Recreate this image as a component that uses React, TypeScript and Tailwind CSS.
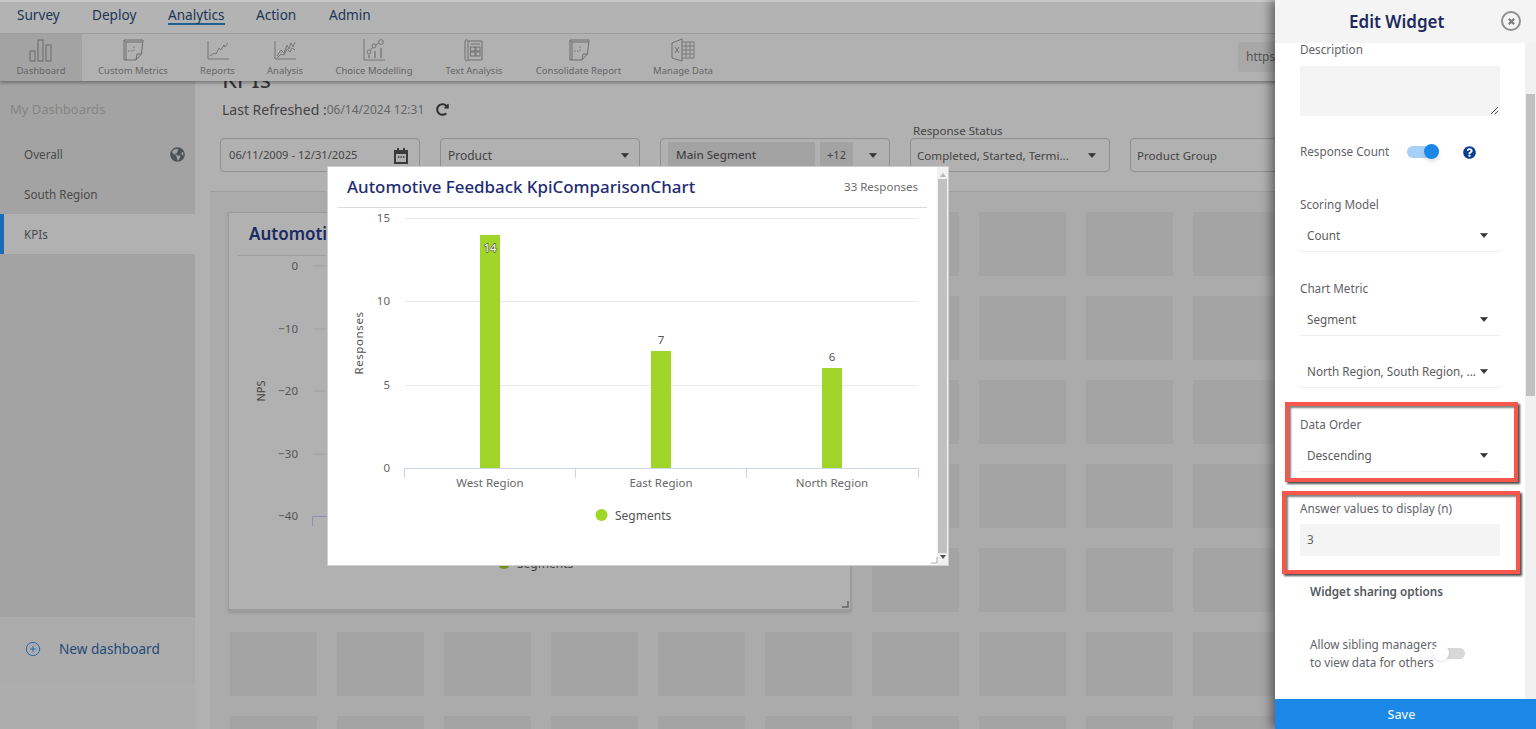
import { CirclePlus } from 'lucide-react';
import { FaGlobeAmericas, FaQuestionCircle, FaRedoAlt } from 'react-icons/fa';

const navItems = [
  { label: 'Survey', className: 'w-[75px]' },
  { label: 'Deploy', className: 'w-[76px]' },
  { label: 'Analytics', className: 'w-[88px]', active: true },
  { label: 'Action', className: 'w-[73px]' },
  { label: 'Admin', className: 'w-[60px]' },
];

function Caret({ className = '' }: { className?: string }) {
  return (
    <svg viewBox="0 0 8 5" className={`w-[8px] h-[5px] shrink-0 ${className}`}>
      <path d="M0.5 0.5 H7.5 L4 4.5 Z" fill="currentColor" stroke="currentColor" strokeLinejoin="round" strokeWidth="0.6" />
    </svg>
  );
}

function PaperIcon() {
  return (
    <svg viewBox="0 0 24 24" className="w-[24px] h-[24px]" fill="none" stroke="#6f6f6f" strokeWidth="1">
      <path d="M3 2 H22 L20.5 16 L15 22 H3 Z" />
      <path d="M3 2 L5 4 H22 M5 4 V22" />
      <path d="M15 22 L16 16 H20.5" />
      <path d="M7 13 H13 V7" strokeDasharray="1.5 1.5" />
    </svg>
  );
}

function ToolIcon({ name }: { name: string }) {
  if (name === 'Dashboard') {
    return (
      <svg viewBox="0 0 24 24" className="w-[24px] h-[24px]" fill="none" stroke="#6f6f6f" strokeWidth="1.1">
        <rect x="1" y="13" width="5" height="10" />
        <rect x="9" y="2" width="5" height="21" />
        <rect x="17" y="7" width="5" height="16" />
      </svg>
    );
  }
  if (name === 'Reports') {
    return (
      <svg viewBox="0 0 24 24" className="w-[24px] h-[24px]" fill="none" stroke="#6f6f6f" strokeWidth="0.9">
        <path d="M2 3 V21 H23" />
        <path d="M4 18 L8 15 L10 16 L13 10 L15 12 L18 7 L19 9 L22 5" />
      </svg>
    );
  }
  if (name === 'Analysis') {
    return (
      <svg viewBox="0 0 24 24" className="w-[24px] h-[24px]" fill="none" stroke="#6f6f6f" strokeWidth="0.9">
        <path d="M2 3 V21 H23" />
        <path d="M4 18 L8 12 L11 15 L14 7 L16 11 L18 5 L20 9 L22 4" />
        <path d="M4 20 L8 16 L11 17 L14 11 L17 14 L19 10 L22 12" />
      </svg>
    );
  }
  if (name === 'Choice Modelling') {
    return (
      <svg viewBox="0 0 24 24" className="w-[24px] h-[24px]" fill="none" stroke="#6f6f6f" strokeWidth="0.9">
        <path d="M2 1 V22 H23" />
        <circle cx="7" cy="14" r="2" />
        <circle cx="12" cy="8" r="2" />
        <circle cx="19" cy="4" r="2.4" />
        <path d="M8.5 12.5 L10.5 9.5 M14 7 L17 5" />
        <path d="M7 17 V20 M13 13 V20 M19 10 V20" strokeWidth="1.2" />
      </svg>
    );
  }
  if (name === 'Text Analysis') {
    return (
      <svg viewBox="0 0 24 24" className="w-[24px] h-[24px]" fill="none" stroke="#6f6f6f" strokeWidth="1">
        <path d="M6 3 H20 V22 H6" />
        <path d="M3 4 C3 1 6 1 6 4 V21 C6 23.5 3 23.5 3 21 Z" />
        <rect x="8.5" y="9" width="4.5" height="4" />
        <rect x="14" y="9" width="4" height="4" />
        <rect x="8.5" y="14" width="4.5" height="4" />
        <rect x="14" y="14" width="4" height="4" />
        <path d="M8.5 6 H18" />
      </svg>
    );
  }
  if (name === 'Manage Data') {
    return (
      <svg viewBox="0 0 24 24" className="w-[24px] h-[24px]" fill="none" stroke="#6f6f6f" strokeWidth="1">
        <path d="M1 5 L11 1 V23 L1 20 Z" />
        <path d="M11 4 H23 V20 H11 M15 4 V20 M19 4 V20 M11 8 H23 M11 12 H23 M11 16 H23" strokeWidth="0.8" />
        <path d="M4 9 L8 15 M8 9 L4 15" />
      </svg>
    );
  }
  return <PaperIcon />;
}

const toolItems = [
  { label: 'Dashboard', className: 'w-[82px] bg-[#a3a3a3]' },
  { label: 'Custom Metrics', className: 'w-[102px]' },
  { label: 'Reports', className: 'w-[67px]' },
  { label: 'Analysis', className: 'w-[68px]' },
  { label: 'Choice Modelling', className: 'w-[110px]' },
  { label: 'Text Analysis', className: 'w-[90px]' },
  { label: 'Consolidate Report', className: 'w-[119px]' },
  { label: 'Manage Data', className: 'w-[90px]' },
];

function BackgroundCard() {
  const ticks = [
    { label: '0', y: 266 },
    { label: '−10', y: 329 },
    { label: '−20', y: 391 },
    { label: '−30', y: 454 },
    { label: '−40', y: 516 },
  ];
  return (
    <div className="absolute left-[18px] top-[20px] w-[623px] h-[400px] bg-[#b1b1b1] border border-[#9c9c9c] border-b-[3px] shadow-sm">
      <div className="mx-[9px] h-[43px] border-b border-[#a0a0a0] pl-[11px] pt-[8px] text-[17px] font-semibold text-[#1a2a62] whitespace-nowrap">
        Automotive Feedback
      </div>
      <svg viewBox="229 256 621 340" className="w-[621px] h-[340px]">
        {ticks.map((t) => (
          <g key={t.label}>
            <text x="298" y={t.y + 4} textAnchor="end" fontSize="11.5" fill="#555">
              {t.label}
            </text>
            {t.label !== '−40' && <line x1="313" x2="840" y1={t.y} y2={t.y} stroke="#a2a2a2" />}
          </g>
        ))}
        <path d="M312.5 526 V516.5 H330" fill="none" stroke="#8d93a8" />
        <text transform="translate(265 391) rotate(-90)" textAnchor="middle" fontSize="11" fill="#444">
          NPS
        </text>
        <circle cx="504" cy="563" r="6" fill="#6f9018" />
        <text x="517" y="568" fontSize="12" fill="#444">
          Segments
        </text>
      </svg>
      <svg viewBox="0 0 8 8" className="absolute right-[1px] bottom-[1px] w-[8px] h-[8px]">
        <path d="M7 1 V7 H1" fill="none" stroke="#666" strokeWidth="1.5" />
      </svg>
    </div>
  );
}

function ChartModal() {
  const gridlines = [
    { label: '15', y: 218 },
    { label: '10', y: 301 },
    { label: '5', y: 385 },
  ];
  const bars = [
    { label: 'West Region', value: '14', x: 480, top: 235, cx: 490 },
    { label: 'East Region', value: '7', x: 651, top: 351, cx: 661 },
    { label: 'North Region', value: '6', x: 822, top: 368, cx: 832 },
  ];
  return (
    <div className="absolute left-[327px] top-[166px] w-[622px] h-[400px] bg-white border border-[#cfcfcf] z-20 flex">
      <div className="flex-1 min-w-0">
        <div className="mx-[10px] h-[41px] flex items-center justify-between border-b border-[#dcdcdc] px-[9px]">
          <span className="text-[16.9px] font-medium text-[#1f2d73] whitespace-nowrap">Automotive Feedback KpiComparisonChart</span>
          <span className="text-[11.5px] text-[#6b6b6b] whitespace-nowrap">33 Responses</span>
        </div>
        <svg viewBox="328 208 610 357" className="w-[610px] h-[357px]">
          {gridlines.map((g) => (
            <g key={g.label}>
              <line x1="405" x2="918" y1={g.y + 0.5} y2={g.y + 0.5} stroke="#e8e8ee" />
              <text x="390" y={g.y + 4} textAnchor="end" fontSize="11.5" fill="#666">
                {g.label}
              </text>
            </g>
          ))}
          <text x="390" y="472" textAnchor="end" fontSize="11.5" fill="#666">
            0
          </text>
          <path d="M404.5 478 V468.5 H918.5 V478 M575.5 468.5 V478 M746.5 468.5 V478" fill="none" stroke="#ccd6eb" />
          <text transform="translate(363 343) rotate(-90)" textAnchor="middle" fontSize="11.5" letterSpacing="0.6" fill="#555">
            Responses
          </text>
          {bars.map((b) => (
            <g key={b.label}>
              <rect x={b.x} y={b.top} width="20" height={468 - b.top} fill="#a0d52a" />
              <text
                x={b.cx}
                y={b.value === '14' ? 252 : b.top - 7}
                textAnchor="middle"
                fontSize="11.5"
                fill={b.value === '14' ? '#fff' : '#555'}
                stroke={b.value === '14' ? '#5a6a40' : 'none'}
                strokeWidth="1.4"
                paintOrder="stroke"
              >
                {b.value}
              </text>
              <text x={b.cx} y="487" textAnchor="middle" fontSize="11.5" fill="#666">
                {b.label}
              </text>
            </g>
          ))}
          <circle cx="601.5" cy="515" r="6" fill="#a0d52a" />
          <text x="615" y="520" fontSize="12" fill="#555">
            Segments
          </text>
        </svg>
      </div>
      <div className="w-[11px] bg-[#f1f1f1] flex flex-col items-center justify-between">
        <span className="w-0 h-0 mt-[6px] border-x-[3px] border-x-transparent border-b-[4px] border-b-[#b8b8b8]" />
        <span className="w-[9px] h-[374px] bg-[#c1c1c1]" />
        <span className="w-0 h-0 mb-[6px] border-x-[3px] border-x-transparent border-t-[4px] border-t-[#505050]" />
      </div>
      <svg viewBox="0 0 8 8" className="absolute right-[10px] bottom-[1px] w-[8px] h-[8px]">
        <path d="M7 1 V7 H1" fill="none" stroke="#aaa" />
      </svg>
    </div>
  );
}

function SelectRow({ value }: { value: string }) {
  return (
    <div className="h-[32px] flex items-center justify-between border-b border-[#ececec] pl-[7px] pr-[12px] text-[11.7px] text-[#5c5c5c]">
      <span className="whitespace-nowrap">{value}</span>
      <Caret className="text-[#333]" />
    </div>
  );
}

function EditDrawer() {
  return (
    <aside className="absolute right-0 top-0 w-[261px] h-[729px] z-30 bg-white flex flex-col shadow-[-4px_0_10px_rgba(0,0,0,0.45)]">
      <div className="h-[43px] shrink-0 bg-[#f4f4f4] relative flex items-center pl-[74px] text-[17px] font-semibold text-[#1e2a5e]">
        Edit Widget
        <span className="absolute left-[226px] top-[11px] w-[20px] h-[20px] rounded-full border-2 border-[#8f8f8f] flex items-center justify-center">
          <svg viewBox="0 0 10 10" className="w-[9px] h-[9px]">
            <path d="M2 2 L8 8 M8 2 L2 8" stroke="#7a7a7a" strokeWidth="2.4" />
          </svg>
        </span>
      </div>

      <div className="flex-1 min-h-0 flex">
        <div className="w-[250px] relative overflow-hidden">
          <div className="pl-[25px] pr-[25px] text-[11.7px] text-[#5f6368]">
            <div className="h-[23px] leading-[12px]">Description</div>
            <div className="h-[50px] bg-[#f4f4f4] relative">
              <svg viewBox="0 0 9 9" className="absolute right-[1px] bottom-[1px] w-[9px] h-[9px]">
                <path d="M1 8 L8 1 M5 8 L8 5" stroke="#555" />
              </svg>
            </div>
            <div className="h-[20px] mt-[26px] flex items-center">
              <span className="w-[107px] whitespace-nowrap">Response Count</span>
              <span className="relative w-[32px] h-[12px] rounded-full bg-[#a6d0f5]">
                <span className="absolute right-0 top-[-2px] w-[15px] h-[15px] rounded-full bg-[#1b87e6] shadow-md" />
              </span>
              <FaQuestionCircle className="ml-[24px] text-[13px] text-[#0b3d8f]" />
            </div>

            <div className="h-[18px] mt-[34px] flex items-center">Scoring Model</div>
            <div className="mt-[6px]">
              <SelectRow value="Count" />
            </div>

            <div className="h-[18px] mt-[28px] flex items-center">Chart Metric</div>
            <div className="mt-[6px]">
              <SelectRow value="Segment" />
            </div>
            <div className="mt-[20px]">
              <SelectRow value="North Region, South Region, ..." />
            </div>

            <div className="h-[18px] mt-[28px] flex items-center">Data Order</div>
            <div className="mt-[6px]">
              <SelectRow value="Descending" />
            </div>

            <div className="h-[18px] mt-[28px] flex items-center whitespace-nowrap">Answer values to display (n)</div>
            <div className="h-[32px] mt-[6px] bg-[#f4f4f4] flex items-center pl-[7px]">3</div>

            <div className="h-[18px] mt-[27px] pl-[10px] flex items-center font-semibold text-[#55595e] whitespace-nowrap">
              Widget sharing options
            </div>
            <div className="mt-[34px] pl-[10px] h-[36px] relative leading-[18px] whitespace-nowrap">
              <div>Allow sibling managers</div>
              <div>to view data for others</div>
              <span className="absolute left-[133px] top-[13px] w-[32px] h-[11px] rounded-full bg-[#d8d8d8]">
                <span className="absolute left-0 top-[-3px] w-[16px] h-[16px] rounded-full bg-white shadow" />
              </span>
            </div>
          </div>
        </div>
        <div className="flex-1 bg-[#f1f1f1] pl-[1px]">
          <div className="h-[302px] w-[9px] mt-[51px] bg-[#c1c1c1]" />
        </div>
      </div>

      <div className="h-[30px] shrink-0 bg-[#1b87e6] flex items-center justify-center pt-[3px] text-[12.5px] font-medium text-[#e8f3fd] pr-[8px]">
        Save
      </div>

      <div className="absolute left-[10px] top-[402px] w-[233px] h-[80px] border-[4px] border-[#f6564c] shadow-[2px_2px_2px_rgba(0,0,0,0.7),inset_2px_2px_2px_rgba(0,0,0,0.5)]" />
      <div className="absolute left-[7px] top-[491px] w-[238px] h-[83px] border-[4px] border-[#f6564c] shadow-[2px_2px_2px_rgba(0,0,0,0.7),inset_2px_2px_2px_rgba(0,0,0,0.5)]" />
    </aside>
  );
}

export default function App() {
  return (
    <div className="relative w-[1536px] h-[729px] overflow-hidden flex flex-col bg-[#b1b1b1] [font-family:'Noto_Sans',sans-serif]">
      <nav className="h-[34px] shrink-0 flex items-center pl-[17px] pb-[5px] bg-[#b3b3b3] border-t-2 border-t-[#c8c8c8] border-b border-b-[#a0a0a0] text-[13.6px] text-[#1c3557]">
        {navItems.map((item) => (
          <div key={item.label} className={item.className}>
            <span className={`inline-block leading-[17px] ${item.active ? 'border-b-2 border-[#1f5f8f]' : ''}`}>{item.label}</span>
          </div>
        ))}
      </nav>

      <div className="h-[47px] shrink-0 relative z-10 flex bg-[#b1b1b1] shadow-[0_2px_3px_rgba(0,0,0,0.3)]">
        {toolItems.map((item) => (
          <div key={item.label} className={`flex flex-col items-center pt-[4px] ${item.className}`}>
            <ToolIcon name={item.label} />
            <span className="mt-[3px] text-[9.5px] leading-[12px] text-[#666] whitespace-nowrap">{item.label}</span>
          </div>
        ))}
        <div className="absolute left-[1238px] top-[8px] w-[60px] h-[30px] rounded-[3px] bg-[#a8a8a8] pl-[8px] flex items-center text-[12px] text-[#555]">
          https:
        </div>
      </div>

      <div className="flex flex-1 min-h-0">
        <aside className="w-[195px] shrink-0 flex flex-col bg-[#adadad]">
          <div className="h-[536px] bg-[#a3a3a3]">
            <div className="h-[53px] pl-[10px] pt-[19px] text-[13px] leading-[18px] text-[#858585]">My Dashboards</div>
            <div className="h-[40px] pl-[24px] pr-[10px] pt-[1px] flex items-center justify-between text-[11.7px] text-[#4a4a4a]">
              Overall
              <FaGlobeAmericas className="text-[15px] text-[#4e5358]" />
            </div>
            <div className="h-[40px] pl-[24px] pt-[1px] flex items-center text-[11.7px] text-[#4a4a4a]">South Region</div>
            <div className="h-[40px] pl-[20px] pt-[1px] flex items-center text-[11.7px] text-[#4a4a4a] bg-[#b1b1b1] border-l-4 border-[#1a6cb8]">KPIs</div>
          </div>
          <div className="h-[66px] bg-[#ababab] pl-[25px] pb-[2px] flex items-center text-[13.6px] text-[#1e4a78]">
            <CirclePlus className="w-[16px] h-[16px] text-[#2a6bb5]" strokeWidth={1.5} />
            <span className="ml-[18px]">New dashboard</span>
          </div>
        </aside>

        <main className="flex-1 min-w-0 flex flex-col pl-[15px] overflow-hidden">
          <div className="h-[111px] shrink-0 relative border-b border-[#9f9f9f]">
            <h1 className="absolute left-[12px] top-[-18px] text-[24px] leading-[32px] text-[#333]">KPIs</h1>
            <div className="absolute left-[12px] top-[18px] flex items-center whitespace-nowrap">
              <span className="text-[14px] text-[#444]">Last Refreshed :</span>
              <span className="text-[12px] text-[#666]">06/14/2024 12:31</span>
              <FaRedoAlt className="ml-[12px] text-[13px] text-[#333]" />
            </div>
            <div className="absolute left-[10px] top-[57px] flex gap-[20px] text-[11.6px] text-[#444] whitespace-nowrap">
              <div className="w-[200px] h-[34px] border border-[#8f8f8f] rounded-[4px] pl-[8px] pr-[11px] pt-[1px] flex items-center justify-between">
                <span className="text-[11.2px]">06/11/2009 - 12/31/2025</span>
                <svg viewBox="0 0 14 16" className="w-[14px] h-[16px]">
                  <path d="M3 0 h2 v2 h4 v-2 h2 v2 h3 v14 h-14 v-14 h3 z" fill="#3a3a3a" />
                  <rect x="2" y="6" width="10" height="8" fill="#b0b0b0" />
                  <path d="M4 9 h1.5 M6.5 9 h1.5 M9 9 h1.5" stroke="#3a3a3a" strokeWidth="1.5" />
                </svg>
              </div>
              <div className="w-[200px] h-[34px] border border-[#8f8f8f] rounded-[4px] pl-[7px] pr-[10px] pt-[1px] flex items-center justify-between text-[12px]">
                Product
                <Caret className="text-[#333]" />
              </div>
              <div className="w-[230px] h-[34px] border border-[#8f8f8f] rounded-[4px] pl-[7px] pr-[12px] flex items-center">
                <span className="w-[147px] h-[27px] bg-[#a3a3a3] pl-[8px] flex items-center font-medium">Main Segment</span>
                <span className="w-[33px] h-[27px] ml-[5px] bg-[#a3a3a3] flex items-center justify-center text-[11px]">+12</span>
                <Caret className="ml-auto text-[#333]" />
              </div>
              <div className="w-[200px] h-[34px] relative border border-[#8f8f8f] rounded-[4px] pl-[6px] pr-[13px] pt-[1px] flex items-center justify-between">
                <span className="absolute left-[2px] top-[-17px] text-[#444]">Response Status</span>
                Completed, Started, Termi...
                <Caret className="text-[#333]" />
              </div>
              <div className="w-[200px] h-[34px] border border-[#8f8f8f] rounded-[4px] pl-[6px] pt-[1px] flex items-center">Product Group</div>
            </div>
          </div>

          <div className="flex-1 min-h-0 relative bg-[#ababab] overflow-hidden">
            <div className="pl-[20px] pt-[20px] grid grid-cols-[repeat(10,87px)] auto-rows-[64px] gap-x-[20px] gap-y-[20px]">
              {Array.from({ length: 70 }).map((_, i) => (
                <div key={i} className="bg-[#a4a4a4]" />
              ))}
            </div>
            <BackgroundCard />
          </div>
        </main>
      </div>

      <ChartModal />
      <EditDrawer />
    </div>
  );
}
